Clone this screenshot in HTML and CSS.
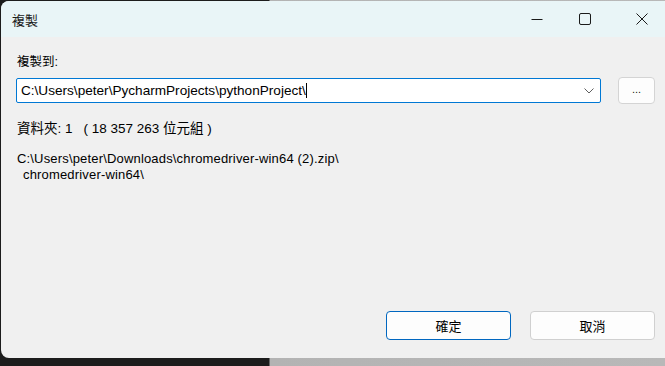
FILE: index.html
```html
<!DOCTYPE html>
<html lang="zh-Hant">
<head>
    <meta charset="UTF-8">
    <meta name="viewport" content="width=device-width, initial-scale=1.0">
    <title>複製</title>
    <link rel="stylesheet" href="styles.css">
</head>
<body>
    <section class="ventana">
        <div class="barra">
            <span class="titulo">複製</span>
            <div class="controles">
                <span class="ctl ctl-min">
                    <svg width="12" height="12" viewBox="0 0 12 12"><path d="M0.5 6.5h11" stroke="#1a1a1a" stroke-width="1"/></svg>
                </span>
                <span class="ctl ctl-max">
                    <svg width="12" height="12" viewBox="0 0 12 12"><rect x="0.5" y="0.5" width="11" height="11" rx="1.5" fill="none" stroke="#1a1a1a" stroke-width="1"/></svg>
                </span>
                <span class="ctl ctl-close">
                    <svg width="12" height="12" viewBox="0 0 12 12"><path d="M0.5 0.5l11 11M11.5 0.5l-11 11" stroke="#1a1a1a" stroke-width="1"/></svg>
                </span>
            </div>
        </div>

        <div class="contenido">
            <div class="etiqueta">複製到:</div>
            <div class="fila">
                <div class="combo">
                    <span class="ruta">C:\Users\peter\PycharmProjects\pythonProject\</span><span class="cursor"></span>
                    <svg class="flecha" width="10" height="6" viewBox="0 0 10 6"><path d="M0.5 0.5l4.5 4.5l4.5-4.5" fill="none" stroke="#5f5f5f" stroke-width="1"/></svg>
                </div>
                <button class="btn-puntos">...</button>
            </div>

            <div class="info">資料夾: 1<span class="hueco"></span>( 18 357 263 位元組 )</div>

            <div class="origen">
                <div>C:\Users\peter\Downloads\chromedriver-win64 (2).zip\</div>
                <div class="sangria">chromedriver-win64\</div>
            </div>
        </div>

        <div class="pie">
            <button class="boton principal">確定</button>
            <button class="boton">取消</button>
        </div>
    </section>
</body>
</html>
```

FILE: styles.css
```css
body {
    margin: 0px;
    padding: 0px;
    height: 366px;
    overflow: hidden;
    background: linear-gradient(to right, #1c1c1c 0px, #1c1c1c 269px, #b3b3b3 270px, #b8b8b8 100%);
    font-family: "Liberation Sans", "Noto Sans CJK TC", sans-serif;
    font-size: 13px;
    color: #000;
}

.ventana {
    margin: 1px 0 0 1px;
    height: 357px;
    background-color: #f0f0f0;
    border-radius: 8px 0 0 8px;
    overflow: hidden;
    display: flex;
    flex-direction: column;
}

.barra {
    height: 36px;
    background-color: #e9f5f7;
    display: flex;
    align-items: center;
    justify-content: space-between;
}

.titulo {
    margin-left: 11px;
    font-size: 13px;
    color: #1a1a1a;
}

.controles {
    display: flex;
    height: 100%;
}

.ctl {
    width: 46px;
    display: flex;
    align-items: center;
    justify-content: center;
}

.ctl-min {
    margin-right: 2px;
}

.ctl-max {
    margin-right: 11px;
}

.contenido {
    flex: 1;
    padding: 17px 10px 0 15px;
}

.etiqueta {
    line-height: 16px;
    margin-bottom: 7px;
    margin-left: 1px;
    font-size: 12.5px;
}

.fila {
    display: flex;
    align-items: center;
}

.combo {
    flex: 1;
    height: 23px;
    margin-right: 17px;
    background-color: #fff;
    border: 1px solid #0078d4;
    border-radius: 2px;
    display: flex;
    align-items: center;
    padding-left: 4px;
    position: relative;
}

.ruta {
    white-space: nowrap;
    font-size: 13.6px;
}

.cursor {
    display: inline-block;
    width: 1px;
    height: 15px;
    background-color: #000;
}

.flecha {
    position: absolute;
    right: 6px;
    top: 9px;
}

.btn-puntos {
    width: 37px;
    height: 27px;
    background-color: #fdfdfd;
    border: 1px solid #d4d4d4;
    border-radius: 4px;
    font-family: inherit;
    font-size: 11px;
    padding: 0 0 4px 0;
    color: #1a1a1a;
}

.info {
    margin-top: 17px;
    margin-left: 1px;
    line-height: 16px;
    font-size: 13.5px;
}

.hueco {
    display: inline-block;
    width: 11px;
}

.origen {
    margin-top: 14px;
    margin-left: 1px;
    line-height: 16px;
    letter-spacing: 0.17px;
}

.sangria {
    padding-left: 6px;
}

.pie {
    display: flex;
    justify-content: flex-end;
    gap: 19px;
    padding: 0 10px 18px 0;
}

.boton {
    width: 125px;
    height: 29px;
    background-color: #fdfdfd;
    border: 1px solid #d0d0d0;
    border-radius: 4px;
    font-family: inherit;
    font-size: 13px;
    color: #000;
}

.principal {
    border-color: #0067c0;
}
```
